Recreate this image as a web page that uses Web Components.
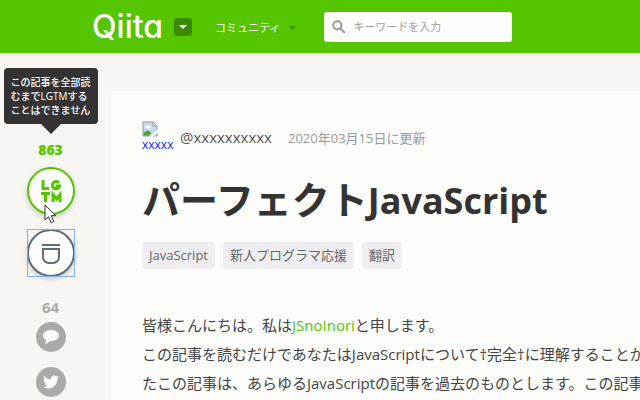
<!DOCTYPE html>
<html lang="ja">
<head>
<meta charset="utf-8">
<title>パーフェクトJavaScript - Qiita</title>
<style>
html, body { margin: 0; }
body {
  min-height: 100vh;
  overflow: hidden;
  background: #f8f6f2;
  color: #444;
  font-family: "Open Sans", "Noto Sans CJK JP", sans-serif;
  font-size: 15px;
}
</style>
</head>
<body>
<qiita-page></qiita-page>
<script>
const define = (name, html) => customElements.define(name, class extends HTMLElement {
  constructor() {
    super();
    this.attachShadow({ mode: "open" }).innerHTML = html;
  }
});

define("site-header", `
<style>
:host { display: flex; align-items: center; height: 53px; padding: 0 92px; background: #55c500; color: #fff; box-sizing: border-box; }
.logo { color: #fff; text-decoration: none; font: 500 32px/40px Inter, sans-serif; font-feature-settings: "cv11"; width: 82px; }
button { border: 0; padding: 0; color: inherit; font: inherit; display: flex; align-items: center; cursor: pointer; }
.switch { width: 18px; height: 18px; border-radius: 3px; background: #3b8a00; justify-content: center; }
.community { background: none; font-size: 11px; line-height: 18px; gap: 9px; margin: 2px 28px 0 23px; white-space: nowrap; }
form { display: flex; align-items: center; flex: 0 1 188px; min-width: 0; height: 30px; padding-left: 8px; gap: 8px; border-radius: 3px; background: #fdfdfc; box-sizing: border-box; }
input { flex: 1; min-width: 0; border: 0; padding: 0; outline: 0; background: none; color: #333; font: 11px/18px "Open Sans", "Noto Sans CJK JP", sans-serif; }
input::placeholder { color: #a0a0a0; opacity: 1; }
svg { flex: none; }
</style>
<a class="logo" href="#">Qiita</a>
<button class="switch" aria-label="メニュー"><svg width="8" height="4" viewBox="0 0 8 4"><path d="M0 0h8L4 4z" fill="#fff"/></svg></button>
<button class="community">コミュニティ<svg width="7" height="4" viewBox="0 0 8 4"><path d="M0 0h8L4 4z" fill="#3b8a00"/></svg></button>
<form role="search">
  <svg width="13" height="13" viewBox="0 0 13 13" fill="none" stroke="#999" stroke-width="2"><circle cx="5.3" cy="5.3" r="4.1"/><path d="M8.4 8.4l3.8 3.8" stroke-linecap="round"/></svg>
  <input type="search" aria-label="キーワードを入力" placeholder="キーワードを入力">
</form>`);

define("tool-tip", `
<style>
:host { display: block; position: relative; padding: 7px; border-radius: 4px; background: #333; color: #fff; font-size: 10px; line-height: 14px; font-weight: 500; white-space: nowrap; }
:host::after { content: ""; position: absolute; top: 100%; left: 50%; margin-left: -10px; border: 10px solid transparent; border-top-color: #333; border-bottom: 0; }
</style><slot></slot>`);

define("round-button", `
<style>
:host { display: block; }
button { display: flex; align-items: center; justify-content: center; width: 48px; height: 48px; padding: 0; border-radius: 50%; border: 2px solid #55c500; background: #fdfdfc; color: #55c500; box-shadow: 0 2px 5px #0003; cursor: pointer; }
:host([kind="stock"]) { outline: 1px solid #83b3ec; outline-offset: -1px; }
:host([kind="stock"]) button { border-color: #5f6d7a; }
:host([kind="small"]) button { width: 30px; height: 30px; border: 0; background: #aaa; color: #fdfdfc; box-shadow: none; }
::slotted(svg) { display: block; flex: none; }
</style><button><slot></slot></button>`);

define("action-rail", `
<style>
:host { display: flex; flex-direction: column; align-items: center; width: 101px; padding-top: 15px; box-sizing: border-box; }
.count { font: 700 14px/20px "Open Sans", sans-serif; color: #aaa; }
.liked { color: #55c500; margin-top: 16px; font-weight: 800; }
.lgtm { position: relative; margin-top: 7px; }
.stock { margin-top: 14px; }
.comments { font-size: 15px; margin-top: 20px; }
.comment { margin-top: 5px; }
.tweet { margin-top: 15px; }
.pointer { position: absolute; left: 17px; top: 37px; }
</style>
<tool-tip>この記事を全部読<br>むまでLGTMする<br>ことはできません</tool-tip>
<div class="count liked">863</div>
<div class="lgtm">
  <round-button>
    <svg role="img" aria-label="LGTM" width="22" height="24" viewBox="0 0 22 24" fill="none" stroke="currentColor" stroke-width="3"><path d="M3 1v8.500h6M19 4a3.700 3.700 0 1 0 .5 3.500v-.5h-4M1 14.500h9M5.500 14.500v8.500M13 23v-7.500l3.500 4.500 3.500-4.500v7.500"/></svg>
  </round-button>
  <svg class="pointer" width="13" height="20" viewBox="0 0 13 20"><path d="M1 1v15l3.500-3.300 2.700 6 2.600-1.200-2.600-5.800h4.600z" fill="#fff" stroke="#333"/></svg>
</div>
<round-button class="stock" kind="stock">
  <svg role="img" aria-label="ストック" width="20" height="22" viewBox="0 0 20 22" fill="none" stroke="#5f6d7a" stroke-width="2"><path d="M1 3h18M2 7h16v8a6 6 0 0 1-6 6H8a6 6 0 0 1-6-6z"/></svg>
</round-button>
<div class="count comments">64</div>
<round-button class="comment" kind="small">
  <svg role="img" aria-label="コメント" width="16" height="14" viewBox="0 0 16 14" fill="currentColor"><path d="M8 0c4.500 0 8 2.400 8 5.500S12.500 11 8 11H7c-1.300 1.600-3 2.500-5.300 2.800C2.800 12.700 3 11.500 2.800 9.800 1 8.800 0 7.200 0 5.500 0 2.400 3.500 0 8 0z"/></svg>
</round-button>
<round-button class="tweet" kind="small">
  <svg role="img" aria-label="Twitter" width="16" height="14" viewBox="0 2 24 20" fill="currentColor"><path d="M23.953 4.570a10 10 0 0 1-2.825.775 4.958 4.958 0 0 0 2.163-2.723 9.900 9.900 0 0 1-3.127 1.184 4.920 4.920 0 0 0-8.384 4.482C7.690 8.095 4.067 6.130 1.640 3.162a4.822 4.822 0 0 0-.666 2.475c0 1.710.870 3.213 2.188 4.096a4.904 4.904 0 0 1-2.228-.616v.060a4.923 4.923 0 0 0 3.946 4.827 4.996 4.996 0 0 1-2.212.085 4.936 4.936 0 0 0 4.604 3.417A9.867 9.867 0 0 1 0 19.540a13.995 13.995 0 0 0 7.548 2.212c9.142 0 14.307-7.721 13.995-14.646a10.025 10.025 0 0 0 2.410-2.536z"/></svg>
</round-button>`);

define("tag-link", `
<style>
:host { display: block; }
a { display: block; padding: 4px 7px; border-radius: 4px; background: #eeedef; color: #666; font-size: 13px; line-height: 19px; text-decoration: none; white-space: nowrap; }
</style><a href="#"><slot></slot></a>`);

define("article-card", `
<style>
:host { display: block; padding: 30px 0 0 31px; background: #fcfcfa; overflow: hidden; box-sizing: border-box; }
.meta { display: flex; align-items: center; height: 32px; white-space: nowrap; }
.avatar { width: 30px; height: 32px; margin-right: 8px; color: #22d; font-size: 12px; line-height: 16px; text-decoration: none; }
.avatar svg, .avatar span { display: block; }
.user { color: #555; text-decoration: none; margin-right: 16px; }
time { color: #999; font-size: 13px; }
h1 { margin: 17px 0 0; color: #333; font-size: 38px; line-height: 58px; font-weight: 700; white-space: nowrap; }
h1 span { font-size: 36px; }
nav { display: flex; gap: 8px; margin-top: 12px; }
p { margin: 42px 0 0; line-height: 29px; white-space: nowrap; }
p a { color: #55c500; text-decoration: none; }
</style>
<div class="meta">
  <a class="avatar" href="#"><svg width="16" height="16" viewBox="0 0 16 16"><path d="M1 1h10l4 4v10H1z" fill="#c6dcf5" stroke="#999"/><path d="M11 1v4h4z" fill="#fff" stroke="#999"/><ellipse cx="6" cy="6" rx="3" ry="1.500" fill="#fff"/><path d="M1.500 14.500V12q4-5 8 0l-2 2.500z" fill="#4ca53c"/><path d="M7 16l9-8v3l-5 5z" fill="#fcfcfa"/></svg><span>xxxxx</span></a>
  <a class="user" href="#">@xxxxxxxxxx</a>
  <time datetime="2020-03-15">2020年03月15日に更新</time>
</div>
<h1>パーフェクト<span>JavaScript</span></h1>
<nav aria-label="タグ"><tag-link>JavaScript</tag-link><tag-link>新人プログラマ応援</tag-link><tag-link>翻訳</tag-link></nav>
<p>皆様こんにちは。私は<a href="#">JSnoInori</a>と申します。<br>この記事を読むだけであなたはJavaScriptについて†完全†に理解することが<br>たこの記事は、あらゆるJavaScriptの記事を過去のものとします。この記事</p>`);

define("qiita-page", `
<style>
:host { display: flex; flex-direction: column; height: 100vh; overflow: hidden; }
site-header { flex: none; }
main { flex: 1; min-height: 0; display: flex; gap: 10px; }
action-rail { flex: none; }
article-card { flex: 1; min-width: 0; margin-top: 38px; }
</style>
<site-header></site-header>
<main><action-rail></action-rail><article-card></article-card></main>`);
</script>
</body>
</html>
